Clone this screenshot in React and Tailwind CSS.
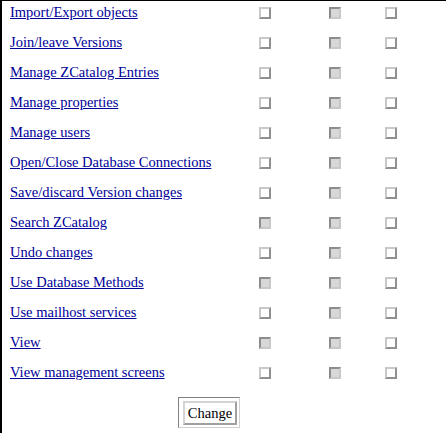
const permissions = [
  ['Import/Export objects', [false, true, false]],
  ['Join/leave Versions', [false, true, false]],
  ['Manage ZCatalog Entries', [false, true, false]],
  ['Manage properties', [false, true, false]],
  ['Manage users', [false, true, false]],
  ['Open/Close Database Connections', [false, true, false]],
  ['Save/discard Version changes', [false, true, false]],
  ['Search ZCatalog', [true, true, false]],
  ['Undo changes', [false, true, false]],
  ['Use Database Methods', [true, true, false]],
  ['Use mailhost services', [false, true, false]],
  ['View', [true, true, false]],
  ['View management screens', [false, true, false]],
];

function Box({ disabled }) {
  if (disabled) {
    return (
      <span className="block w-[12px] h-[12px] border-2 border-t-[#8c8c8c] border-l-[#8c8c8c] border-r-[#c8c8c8] border-b-[#c8c8c8] bg-[#d8d8d8]" />
    );
  }
  return (
    <span className="block w-[12px] h-[12px] border-2 border-t-[#c8c8c8] border-l-[#c8c8c8] border-r-[#909090] border-b-[#909090] bg-white" />
  );
}

export default function App() {
  return (
    <div
      className="w-[446px] h-[433px] bg-white border-l-2 border-t border-black overflow-hidden"
      style={{ fontFamily: '"Liberation Serif", "Times New Roman", serif' }}
    >
      {permissions.map(([label, boxes]) => (
        <div key={label} className="h-[30px] flex items-start">
          <a href="#" className="w-[257px] pl-[8px] mt-[3px] text-[14.5px] leading-[16px] text-[#000099] underline">
            {label}
          </a>
          <div className="mt-[6px] flex">
            <Box disabled={boxes[0]} />
            <span className="w-[58px]" />
            <Box disabled={boxes[1]} />
            <span className="w-[44px]" />
            <Box disabled={boxes[2]} />
          </div>
        </div>
      ))}
      <div className="mt-[6px] ml-[176px] w-[62px] h-[31px] border border-t-[#808080] border-l-[#808080] border-r-[#d0d0d0] border-b-[#d0d0d0] p-[3px] pl-[4px]">
        <button className="w-[54px] h-[24px] bg-white border-2 border-t-[#d4d4d4] border-l-[#d4d4d4] border-r-[#a0a0a0] border-b-[#a0a0a0] text-[14.5px] leading-none text-black">
          Change
        </button>
      </div>
    </div>
  );
}
